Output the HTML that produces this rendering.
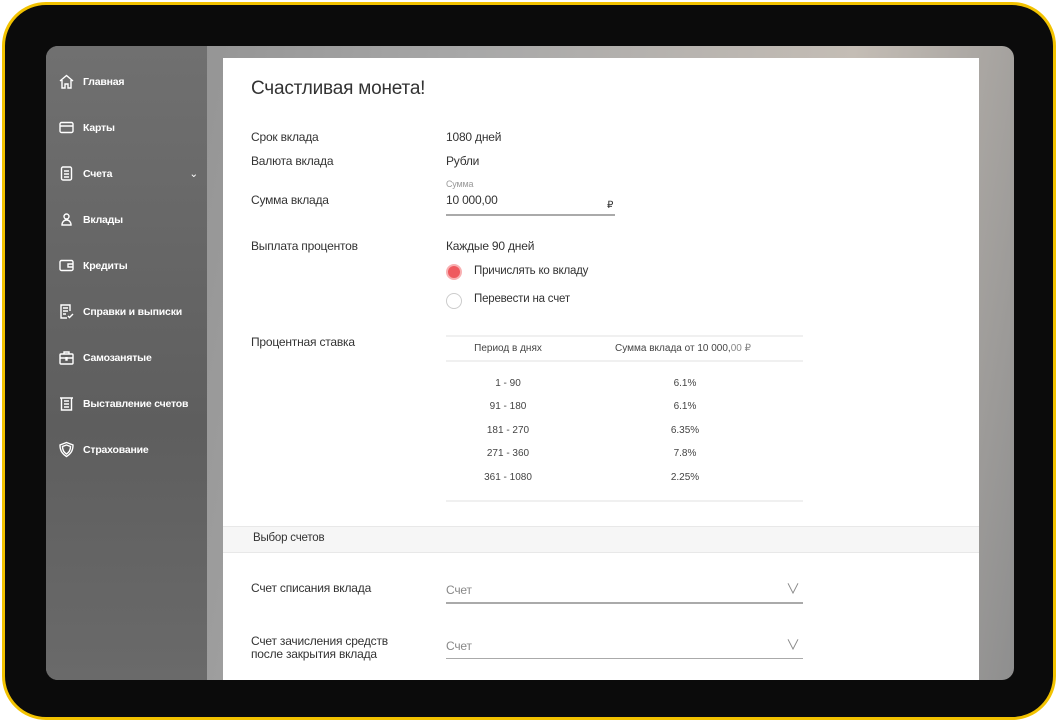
<!DOCTYPE html>
<html><head><meta charset="utf-8"><style>
*{margin:0;padding:0;box-sizing:border-box}
body{width:1058px;height:722px;background:#fff;font-family:"Liberation Sans","Noto Sans CJK SC",sans-serif;position:relative;overflow:hidden}
.frame{position:absolute;left:2px;top:2px;width:1054px;height:718px;border:3px solid #f2c200;border-radius:44px;background:#0b0b0b}
.screen{position:absolute;left:46px;top:46px;width:968px;height:634px;border-radius:12px;overflow:hidden;background:linear-gradient(100deg,#8a8a8a 0%,#a8a8a8 40%,#c4bdb5 75%,#8e8e8e 100%)}
.side{position:absolute;left:0;top:0;width:161px;height:634px;background:linear-gradient(180deg,#707070,#5e5e5e 60%,#6a6a6a)}
.nav{position:absolute;left:12px;color:#fff;font-size:10.5px;font-weight:bold;display:flex;align-items:center;letter-spacing:-0.2px}
.nav svg{width:17px;height:17px;margin-right:8px}
.card{position:absolute;left:177px;top:12px;width:756px;height:640px;background:#fff}
.t{position:absolute;font-size:12px;color:#333;letter-spacing:-0.2px}
.l{position:absolute;left:28px;font-size:12px;color:#333;letter-spacing:-0.2px}
.c{position:absolute;font-size:10px;color:#444;text-align:center}
.line{position:absolute;height:1px;background:#e8e8e8}
</style></head><body>
<div class="frame"></div>
<div class="screen">
<div class="side">
<div class="nav" style="top:27px"><svg viewBox="0 0 17 17" fill="none" stroke="#fff" stroke-width="1.4"><path d="M2 8L8.5 2.5 15 8M4 7v8h3v-4h3v4h3V7"/></svg>Главная</div>
<div class="nav" style="top:73px"><svg viewBox="0 0 17 17" fill="none" stroke="#fff" stroke-width="1.4"><rect x="2" y="3.5" width="13" height="10" rx="1.5"/><path d="M2 7h13"/></svg>Карты</div>
<div class="nav" style="top:119px;width:140px"><svg viewBox="0 0 17 17" fill="none" stroke="#fff" stroke-width="1.4"><rect x="3.5" y="2" width="10" height="13" rx="1.5"/><path d="M6 6h5M6 9h5M6 12h5"/></svg>Счета<span style="margin-left:auto;font-weight:normal">⌄</span></div>
<div class="nav" style="top:165px"><svg viewBox="0 0 17 17" fill="none" stroke="#fff" stroke-width="1.4"><circle cx="8.5" cy="5.5" r="2.5"/><path d="M4 14c0-3 2-5 4.5-5s4.5 2 4.5 5z"/></svg>Вклады</div>
<div class="nav" style="top:211px"><svg viewBox="0 0 17 17" fill="none" stroke="#fff" stroke-width="1.4"><rect x="2" y="3.5" width="13" height="10" rx="1.5"/><path d="M15 7h-5v3h5"/></svg>Кредиты</div>
<div class="nav" style="top:257px"><svg viewBox="0 0 17 17" fill="none" stroke="#fff" stroke-width="1.4"><path d="M12 8V2H3v13h6M5 5h5M5 8h5M5 11h3M10 13l1.5 1.5L15 11"/></svg>Справки и выписки</div>
<div class="nav" style="top:303px"><svg viewBox="0 0 17 17" fill="none" stroke="#fff" stroke-width="1.4"><rect x="2" y="5" width="13" height="10" rx="1"/><path d="M6 5V3h5v2M2 9h13M8 8v3h1V8"/></svg>Самозанятые</div>
<div class="nav" style="top:349px"><svg viewBox="0 0 17 17" fill="none" stroke="#fff" stroke-width="1.4"><path d="M2 3h13M3.5 3v12h10V3M6 6h5M6 9h5M6 12h5"/></svg>Выставление счетов</div>
<div class="nav" style="top:395px"><svg viewBox="0 0 17 17" fill="none" stroke="#fff" stroke-width="1.4"><path d="M8.5 1.5L15 4c0 6-2.5 9-6.5 11.5C4.5 13 2 10 2 4z"/><path d="M8.5 4l4 1.5c0 4-1.5 6-4 7.5-2.5-1.5-4-3.5-4-7.5z"/></svg>Страхование</div>
</div>
<div class="card">
<div class="t" style="left:28px;top:20px;font-size:19px;color:#333">Счастливая монета!</div>
<div class="l" style="top:72px">Срок вклада</div><div class="t" style="left:223px;top:72px">1080 дней</div>
<div class="l" style="top:96px">Валюта вклада</div><div class="t" style="left:223px;top:96px">Рубли</div>
<div class="t" style="left:223px;top:121px;font-size:9px;color:#999">Сумма</div>
<div class="l" style="top:135px">Сумма вклада</div><div class="t" style="left:223px;top:135px">10 000,00</div>
<div class="t" style="left:384px;top:142px;font-size:10px">₽</div>
<div style="position:absolute;left:223px;top:156px;width:169px;height:2px;background:#aaa"></div>
<div class="l" style="top:181px">Выплата процентов</div><div class="t" style="left:223px;top:181px">Каждые 90 дней</div>
<div style="position:absolute;left:223px;top:206px;width:16px;height:16px;border-radius:50%;background:#ef5a5f;border:2px solid #f8b0b2"></div>
<div class="t" style="left:251px;top:207px;font-size:11.5px">Причислять ко вкладу</div>
<div style="position:absolute;left:223px;top:235px;width:16px;height:16px;border-radius:50%;border:1px solid #ccc"></div>
<div class="t" style="left:251px;top:235px;font-size:11.5px">Перевести на счет</div>
<div class="l" style="top:277px">Процентная ставка</div>
<div class="line" style="left:223px;top:277px;width:357px;height:2px;background:#f0f0f0"></div>
<div class="c" style="left:223px;top:285px;width:124px">Период в днях</div>
<div class="c" style="left:380px;top:285px;width:160px">Сумма вклада от 10 000,<span style="color:#888">00 ₽</span></div>
<div class="line" style="left:223px;top:302px;width:357px;height:2px;background:#f0f0f0"></div>
<div class="c" style="left:223px;top:320px;width:124px">1 - 90</div><div class="c" style="left:400px;top:320px;width:124px">6.1%</div>
<div class="c" style="left:223px;top:343px;width:124px">91 - 180</div><div class="c" style="left:400px;top:343px;width:124px">6.1%</div>
<div class="c" style="left:223px;top:367px;width:124px">181 - 270</div><div class="c" style="left:400px;top:367px;width:124px">6.35%</div>
<div class="c" style="left:223px;top:390px;width:124px">271 - 360</div><div class="c" style="left:400px;top:390px;width:124px">7.8%</div>
<div class="c" style="left:223px;top:414px;width:124px">361 - 1080</div><div class="c" style="left:400px;top:414px;width:124px">2.25%</div>
<div class="line" style="left:223px;top:442px;width:357px;height:2px;background:#f0f0f0"></div>
<div style="position:absolute;left:0;top:468px;width:756px;height:27px;background:#f6f6f6;border-top:1px solid #e8e8e8;border-bottom:1px solid #e8e8e8"></div>
<div class="l" style="top:474px;left:30px;font-size:11.5px">Выбор счетов</div>
<div class="l" style="top:523px">Счет списания вклада</div>
<div class="t" style="left:223px;top:525px;color:#888">Счет</div>
<div class="t" style="left:563px;top:521px;color:#888;font-size:14px">∨</div>
<div style="position:absolute;left:223px;top:544px;width:357px;height:2px;background:#aaa"></div>
<div class="l" style="top:577px;line-height:13px">Счет зачисления средств<br>после закрытия вклада</div>
<div class="t" style="left:223px;top:581px;color:#888">Счет</div>
<div class="t" style="left:563px;top:577px;color:#888;font-size:14px">∨</div>
<div style="position:absolute;left:223px;top:600px;width:357px;height:1px;background:#aaa"></div>
</div>
</div>
</body></html>
